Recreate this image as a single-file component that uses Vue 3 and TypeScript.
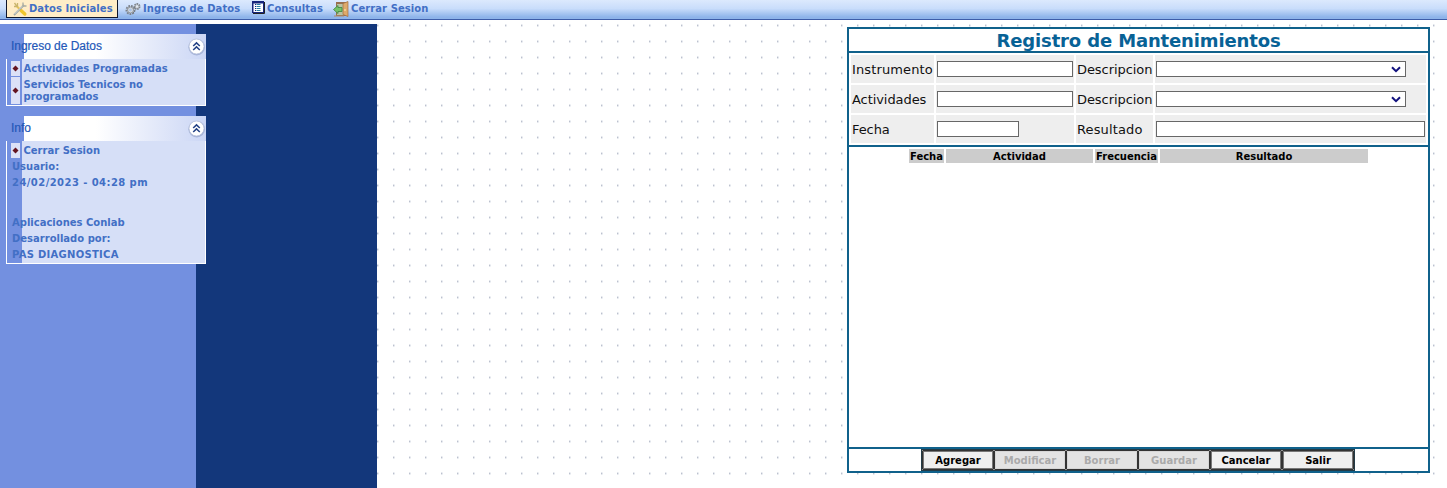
<script setup lang="ts">
interface MenuItem { label: string; icon: string; cls: string }
interface Action { label: string; enabled: boolean }

const menu: MenuItem[] = [
  { label: 'Datos Iniciales', icon: 'tools', cls: 'm-datos' },
  { label: 'Ingreso de Datos', icon: 'gears', cls: 'm-ingreso' },
  { label: 'Consultas', icon: 'list', cls: 'm-consultas' },
  { label: 'Cerrar Sesion', icon: 'door', cls: 'm-cerrar' },
]
const actions: Action[] = [
  { label: 'Agregar', enabled: true },
  { label: 'Modificar', enabled: false },
  { label: 'Borrar', enabled: false },
  { label: 'Guardar', enabled: false },
  { label: 'Cancelar', enabled: true },
  { label: 'Salir', enabled: true },
]
const columns = ['Fecha', 'Actividad', 'Frecuencia', 'Resultado']
const panels = ['Ingreso de Datos', 'Info']
</script>

<template>
  <div class="page">
    <nav class="menubar">
      <a v-for="m in menu" :key="m.label" class="item" :class="m.cls">
        <svg v-if="m.icon === 'tools'" class="icon" width="16" height="16" viewBox="0 0 16 16">
          <path d="M5 5.500 9 9.500" stroke="#e8c657" stroke-width="2" />
          <path d="M9 9.500l3.800 3.500" stroke="#f0c62c" stroke-width="3.400" stroke-linecap="round" />
          <path d="M2.500 2 5 5.500M5.500 2v3.500H2" stroke="#c9b56c" stroke-width="1.300" fill="none" />
          <path d="M2 14 12 4" stroke="#a3a9a4" stroke-width="1.800" />
          <path d="M2.500 13 11 4.500" stroke="#e3e6df" stroke-width=".8" />
          <path d="M11 1.500v3.500h3.500" stroke="#a9aca2" stroke-width="1.300" fill="none" />
        </svg>
        <svg v-else-if="m.icon === 'gears'" class="icon" width="16" height="16" viewBox="0 0 16 16">
          <circle cx="5.500" cy="9" r="4" fill="none" stroke="#7b8189" stroke-width="2" stroke-dasharray="1.700 1" />
          <circle cx="5.500" cy="9" r="3" fill="#d3d9df" stroke="#8f959c" />
          <circle cx="5.500" cy="9" r="1.400" fill="#a9c2e6" />
          <circle cx="12" cy="5.500" r="2.600" fill="#c9ced3" stroke="#7b8189" stroke-width="1.800" stroke-dasharray="1.500 .8" />
          <circle cx="12" cy="5.500" r="1" fill="#e3ebf6" />
          <path d="M7.500 12.500l2.500-2.500M8.500 7l2-1" stroke="#777c83" />
        </svg>
        <svg v-else-if="m.icon === 'list'" class="icon" width="13" height="13" viewBox="0 0 13 13">
          <path d="M0 0h12v12H0z" fill="#17267c" />
          <path d="M1.500 2.500h9.500v8.500H1.500z" fill="#fff" />
          <path d="M3 3.500h1M3 5.500h1M3 7.500h1M3 9.500h1" stroke="#17267c" />
          <path d="M4.500 3.500h4M4.500 5.500h4M4.500 7.500h4M4.500 9.500h4" stroke="#2b82a6" />
          <path d="M12.500 1v11.500H1" fill="none" stroke="#222" />
        </svg>
        <svg v-else class="icon" width="17" height="16" viewBox="0 0 17 16">
          <path d="M3 1h12v14H3z" fill="#98704f" />
          <path d="M4 3h7v11H4z" fill="#b9c3a4" />
          <path d="M10 2.500l5-2v15l-5-2z" fill="#deaa6b" stroke="#a06f42" stroke-width=".7" />
          <path d="M12 8v2" stroke="#fff2b0" />
          <path d="M.5 8.500 5 4.500v2h4v4H5v2z" fill="#76c469" stroke="#3d8540" stroke-width=".8" />
          <path d="M1 15h10" stroke="#b18c66" />
        </svg>
        <span>{{ m.label }}</span>
      </a>
    </nav>

    <div class="body">
      <aside class="sidebar">
        <section v-for="(p, i) in panels" :key="p" class="panel">
          <header>
            <h2>{{ p }}</h2>
            <svg width="19" height="19" viewBox="0 0 19 19">
              <circle cx="9.700" cy="10.200" r="8.300" fill="#7d8fbd" opacity=".5" />
              <circle cx="9.500" cy="9.500" r="7.500" fill="#fff" stroke="#b2bdd8" stroke-width=".8" />
              <path d="M6.200 9 9.500 5.900 12.800 9M6.200 13 9.500 9.900l3.300 3.100" fill="none" stroke="#244386" stroke-width="1.500" />
            </svg>
          </header>
          <div v-if="i === 0" class="content">
            <div class="link one">
              <i><svg width="7" height="7" viewBox="0 0 7 7"><path d="M3.500.5 6.500 3.500l-3 3-3-3z" fill="#641421" /></svg></i>
              <span>Actividades Programadas</span>
            </div>
            <div class="link two">
              <i><svg width="7" height="7" viewBox="0 0 7 7"><path d="M3.500.5 6.500 3.500l-3 3-3-3z" fill="#641421" /></svg></i>
              <span>Servicios Tecnicos no<br />programados</span>
            </div>
          </div>
          <div v-else class="content info">
            <div class="link one">
              <i><svg width="7" height="7" viewBox="0 0 7 7"><path d="M3.500.5 6.500 3.500l-3 3-3-3z" fill="#641421" /></svg></i>
              <span>Cerrar Sesion</span>
            </div>
            <p>Usuario:</p>
            <p class="date">24/02/2023 - 04:28 pm</p>
            <p class="gap">Aplicaciones Conlab</p>
            <p>Desarrollado por:</p>
            <p class="brand">PAS DIAGNOSTICA</p>
          </div>
        </section>
      </aside>
      <div class="navy"></div>
      <main class="canvas">
        <form class="form" @submit.prevent>
          <h1>Registro de Mantenimientos</h1>
          <div class="fields">
            <label class="wide">Instrumento</label><div><input type="text" /></div>
            <label>Descripcion</label>
            <div><span class="select"><svg width="10" height="7" viewBox="0 0 10 7"><path d="M1 1.200 5 5.200 9 1.200" fill="none" stroke="#12127e" stroke-width="2" /></svg></span></div>
            <label>Actividades</label><div><input type="text" /></div>
            <label>Descripcion</label>
            <div><span class="select"><svg width="10" height="7" viewBox="0 0 10 7"><path d="M1 1.200 5 5.200 9 1.200" fill="none" stroke="#12127e" stroke-width="2" /></svg></span></div>
            <label>Fecha</label><div><input class="short" type="text" /></div>
            <label class="wide">Resultado</label><div><input class="long" type="text" /></div>
          </div>
          <div class="results">
            <div class="thead"><b v-for="c in columns" :key="c">{{ c }}</b></div>
          </div>
          <footer>
            <div class="buttons">
              <button v-for="a in actions" :key="a.label" type="button" :disabled="!a.enabled">{{ a.label }}</button>
            </div>
          </footer>
        </form>
      </main>
    </div>
  </div>
</template>

<style>
html, body { margin: 0; background: #fff; overflow: hidden; }
</style>

<style scoped>
* { box-sizing: border-box; }
.page { width: 1447px; height: 488px; overflow: hidden; font-family: Verdana, "DejaVu Sans", sans-serif; display: flex; flex-direction: column; }
.menubar { height: 20px; flex: none; display: flex; align-items: flex-start; padding-left: 6px; background: linear-gradient(#dce9fd 0, #c9ddfb 45%, #8eb4ea 90%); border-bottom: 1px solid #3d5da9; }
.item { height: 18px; display: flex; align-items: center; color: #426fc5; font-size: 10px; letter-spacing: .07px; font-weight: bold; line-height: 16px; white-space: nowrap; flex: none; }
.icon { flex: none; display: block; }
.m-datos { width: 112px; background: #ffedc7; border: 1px solid #10172b; border-top: 0; padding-left: 5px; }
.m-datos span { margin-left: 1px; }
.m-ingreso { width: 134px; padding-left: 7px; }
.m-ingreso span { margin-left: 2px; }
.m-consultas { width: 81px; }
.m-consultas .icon { margin-top: -4px; }
.m-consultas span { margin-left: 2px; }
.m-cerrar span { margin-left: 1px; }
.body { margin-top: 4px; display: flex; height: 464px; }
.sidebar { width: 196px; flex: none; background: #7390e0; padding: 10px 0 0 6px; position: relative; z-index: 1; }
.navy { width: 181px; flex: none; background: #13377b; }
.panel { width: 200px; margin-bottom: 10px; }
.panel header { height: 25px; display: flex; align-items: center; justify-content: space-between; padding: 0 0 0 5px; background: linear-gradient(90deg, transparent 18px, #fff 18px, #fff 90px, #cbd6f5); }
.panel h2 { margin: 0; font: 500 12px/25px "Liberation Sans", Arial, sans-serif; letter-spacing: -.03px; color: #2358b8; -webkit-text-stroke: .2px #2358b8; }
.content { border: 1px solid #fff; border-top: 0; background: linear-gradient(90deg, transparent 15px, #d6dff7 15px); padding: 2px 4px; height: 47px; color: #426fc5; font-size: 10px; line-height: 12px; font-weight: bold; white-space: nowrap; }
.link { display: flex; align-items: center; }
.link i { width: 9px; height: 100%; margin-right: 3.5px; background: #dce1f7; display: flex; align-items: center; justify-content: center; }
.one { height: 15px; margin-bottom: 1px; }
.two { height: 27px; }
.info { height: 123px; }
.info p { margin: 0 0 0 1px; line-height: 16px; }
.info .gap { margin-top: 24px; }
.info .date { letter-spacing: .43px; }
.info .brand { letter-spacing: .28px; }
.canvas { flex: 1; padding: 3px 17px 0 470px; background: radial-gradient(circle at .5px 1.5px, #bcc1ce 0, #d4d8e1 .7px, #eceef3 1.2px, transparent 2px) 0 0 / 16px 16px #fff; }
.form { width: 583px; height: 446px; border: 2px solid #10618b; background: #fff; }
h1 { margin: 0; height: 24px; border-bottom: 2px solid #10618b; color: #086296; font-size: 18px; line-height: 24px; text-align: center; letter-spacing: -.14px; white-space: nowrap; }
.fields { height: 94px; border-bottom: 2px solid #10618b; padding: 2px; display: grid; grid-template-columns: 83px 138px 77px 271px; grid-auto-rows: 28px; gap: 2px; }
.fields > * { background: #eee; display: flex; align-items: center; padding: 0 1px; font-size: 13px; color: #111; white-space: nowrap; letter-spacing: -.07px; }
.fields .wide { letter-spacing: .13px; }
input, .select { width: 136px; height: 16px; border: 1px solid #676767; background: #fff; padding: 0; margin: 0; display: block; }
.fields .short { width: 82px; }
.fields .long { width: 269px; }
.select { width: 250px; display: flex; align-items: center; justify-content: flex-end; padding-right: 4px; }
.results { height: 302px; border-bottom: 2px solid #10618b; padding-top: 2px; }
.thead { display: grid; grid-template-columns: 35px 147px 63px 208px; grid-template-rows: 14px; gap: 2px; margin-left: 60px; font-size: 10px; line-height: 15px; text-align: center; height: 14px; }
.thead b { background: #ccc; white-space: nowrap; height: 14px; }
footer { height: 22px; padding: 0 0 0 72px; }
.buttons { width: 434px; height: 22px; border: 1px solid #243b46; display: grid; grid-template-columns: repeat(6, 72px); }
button { margin: 0; padding: 0; height: 20px; background: #efefef; border: 1px solid #333; outline: 1px solid #777; outline-offset: -2px; border-radius: 1px; font: bold 10px Verdana, "DejaVu Sans", sans-serif; color: #000; }
button:disabled { background: #e3e3e3; color: #aaa; outline-color: #d6d6d6; }
</style>
